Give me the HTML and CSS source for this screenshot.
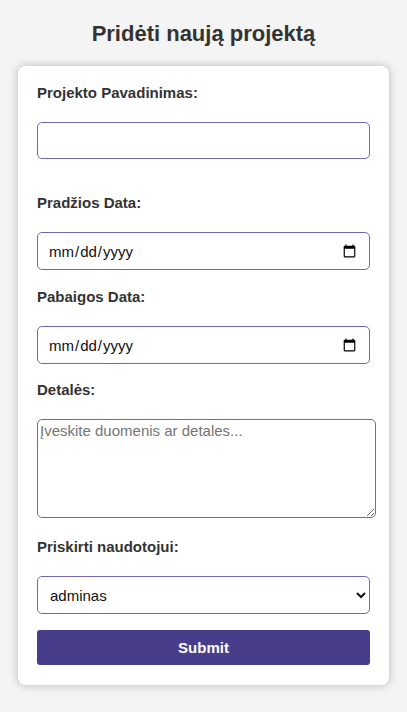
FILE: index.html
```html
<!DOCTYPE html>
<html lang="lt">
<head>
<meta charset="utf-8">
<title>Pridėti naują projektą</title>
<link rel="stylesheet" href="styles.css">
</head>
<body>
<h2 class="title">Pridėti naują projektą</h2>
<form class="card">
  <label class="lbl" for="pav">Projekto Pavadinimas:</label>
  <input class="field field-text" id="pav" type="text">
  <label class="lbl" for="start">Pradžios Data:</label>
  <input class="field field-start" id="start" type="date">
  <label class="lbl" for="end">Pabaigos Data:</label>
  <input class="field" id="end" type="date">
  <label class="lbl" for="det">Detalės:</label>
  <textarea class="area" id="det" placeholder="Įveskite duomenis ar detales..."></textarea>
  <label class="lbl" for="usr">Priskirti naudotojui:</label>
  <select class="field sel" id="usr"><option>adminas</option></select>
  <button class="btn" type="button">Submit</button>
</form>
</body>
</html>
```
FILE: styles.css
```css
html, body { margin: 0; padding: 0; }
body {
  background: #f4f4f4;
  font-family: "Liberation Sans", Arial, sans-serif;
  color: #333;
  height: 712px;
}
.title {
  margin: 0;
  padding-top: 20px;
  height: 66px;
  box-sizing: border-box;
  font-size: 22px;
  line-height: 28px;
  text-align: center;
  font-weight: bold;
}
.card {
  display: flex;
  flex-direction: column;
  align-items: flex-start;
  margin: 0 18px;
  background: #fff;
  border-radius: 8px;
  padding: 18px 19px 20px;
  box-shadow: 0 0 10px rgba(0,0,0,0.25);
}
.lbl {
  font-weight: bold;
  font-size: 15px;
  line-height: 18px;
  margin-bottom: 20px;
}
.field {
  width: 333px;
  box-sizing: border-box;
  height: 38px;
  border: 1px solid #7466b3;
  border-radius: 5px;
  font-family: "Liberation Sans", Arial, sans-serif;
  font-size: 15px;
  padding: 8px 10px;
  background: #fff;
  color: #111;
  margin-bottom: 17px;
}
.field-text { height: 37px; margin-bottom: 35px; }
.field-start { margin-bottom: 18px; }
.area {
  width: 339px;
  box-sizing: border-box;
  height: 99px;
  border: 1px solid #7466b3;
  border-radius: 5px;
  font-family: "Liberation Sans", Arial, sans-serif;
  font-size: 15px;
  padding: 2px;
  margin-bottom: 20px;
}
.area::placeholder { color: #757575; }
.sel { padding: 8px 8px; margin-bottom: 16px; }
.btn {
  width: 333px;
  height: 35px;
  border: none;
  border-radius: 3px;
  background: #483d8b;
  color: #fff;
  font-family: "Liberation Sans", Arial, sans-serif;
  font-size: 15px;
  font-weight: bold;
}
```
